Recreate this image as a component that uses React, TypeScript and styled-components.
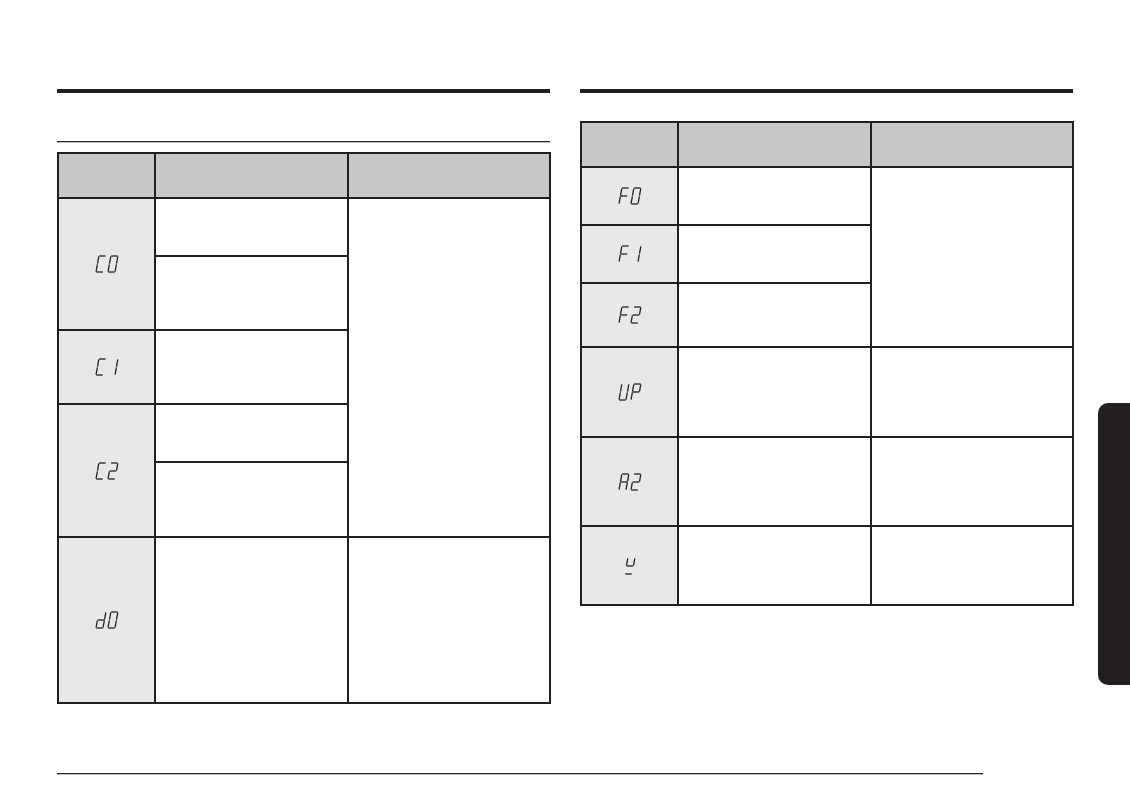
import React from "react";
import styled, { createGlobalStyle } from "styled-components";

const Global = createGlobalStyle`
  html, body { margin: 0; padding: 0; background: #ffffff; }
  body { font-family: "Liberation Sans", Arial, sans-serif; color: #231f20; }
`;

const INK = "#231f20";

const Page = styled.div`
  width: 1130px;
  height: 800px;
  box-sizing: border-box;
  padding: 89px 0 26px 57px;
  display: flex;
  flex-direction: column;
  overflow: hidden;
`;

const Main = styled.div`
  display: flex;
  align-items: flex-start;
`;

const Column = styled.section`
  width: 493px;
  display: flex;
  flex-direction: column;
  & + & {
    margin-left: 30px;
  }
`;

const TopRule = styled.div`
  height: 4px;
  background: ${INK};
`;

const SubRule = styled.div`
  height: 1px;
  margin-top: 48px;
  background: ${INK};
  box-shadow: 0 0.5px 0 rgba(35, 31, 32, 0.5);
`;

const Table = styled.table<{ $top: number }>`
  margin-top: ${(p) => p.$top}px;
  width: 492px;
  border-collapse: collapse;
  table-layout: fixed;
`;

const Row = styled.tr<{ $h: number }>`
  height: ${(p) => p.$h}px;
`;

const HeadCell = styled.th`
  background: #c8c8c8;
  border: 2px solid ${INK};
  padding: 0;
`;

const CodeCell = styled.td`
  background: #e8e8e8;
  border: 2px solid ${INK};
  text-align: center;
  vertical-align: middle;
  padding: 0;
`;

const Cell = styled.td`
  background: #ffffff;
  border: 2px solid ${INK};
  padding: 0;
`;

const Tab = styled.div`
  margin-left: 25px;
  margin-top: 314px;
  width: 32px;
  height: 282px;
  background: ${INK};
  border-radius: 10px 0 0 10px;
  flex-shrink: 0;
`;

const FooterRule = styled.div`
  margin-top: auto;
  width: 926px;
  height: 1px;
  background: ${INK};
  box-shadow: 0 0.5px 0 rgba(35, 31, 32, 0.5);
`;

const SegSvg = styled.svg`
  display: block;
  margin: 0 auto;
  overflow: visible;
`;

type Seg = "a" | "b" | "c" | "d" | "e" | "f" | "g";

const GLYPHS: Record<string, Seg[]> = {
  C: ["a", "d", "e", "f"],
  "0": ["a", "b", "c", "d", "e", "f"],
  "1": ["b", "c"],
  "2": ["a", "b", "g", "e", "d"],
  d: ["b", "c", "d", "e", "g"],
  F: ["a", "f", "e", "g"],
  U: ["b", "c", "d", "e", "f"],
  P: ["a", "b", "f", "g", "e"],
  A: ["a", "b", "c", "e", "f", "g"],
  u: ["f", "b", "g", "d"],
};

const W = 7;
const H = 16;
const K = 0.18;
const PITCH = 12;
const GAP = 0.9;

const SEGS: Record<Seg, [number, number, number, number]> = {
  a: [0, 0, W, 0],
  b: [W, 0, W, H / 2],
  c: [W, H / 2, W, H],
  d: [0, H, W, H],
  e: [0, H / 2, 0, H],
  f: [0, 0, 0, H / 2],
  g: [0, H / 2, W, H / 2],
};

function SegCode({ code, label }: { code: string; label: string }) {
  const chars = code.split("");
  const width = PITCH * (chars.length - 1) + W + H * K + 2;
  const lines: React.ReactNode[] = [];
  chars.forEach((ch, i) => {
    const ox = 1 + i * PITCH;
    (GLYPHS[ch] || []).forEach((s) => {
      let [x1, y1, x2, y2] = SEGS[s];
      const len = Math.hypot(x2 - x1, y2 - y1);
      const ux = (x2 - x1) / len;
      const uy = (y2 - y1) / len;
      x1 += ux * GAP;
      y1 += uy * GAP;
      x2 -= ux * GAP;
      y2 -= uy * GAP;
      const sx = (x: number, y: number) => ox + x + (H - y) * K;
      lines.push(
        <line
          key={`${i}${s}`}
          x1={sx(x1, y1)}
          y1={y1 + 1}
          x2={sx(x2, y2)}
          y2={y2 + 1}
          stroke={INK}
          strokeWidth={1.3}
          strokeLinecap="square"
        />
      );
    });
  });
  return (
    <SegSvg width={width} height={H + 2} viewBox={`0 0 ${width} ${H + 2}`} role="img" aria-label={label}>
      <title>{label}</title>
      {lines}
    </SegSvg>
  );
}

function Cols() {
  return (
    <colgroup>
      <col style={{ width: 97 }} />
      <col style={{ width: 193 }} />
      <col style={{ width: 202 }} />
    </colgroup>
  );
}

function Header() {
  return (
    <thead>
      <Row $h={45}>
        <HeadCell />
        <HeadCell />
        <HeadCell />
      </Row>
    </thead>
  );
}

export default function App() {
  return (
    <>
      <Global />
      <Page>
        <Main>
          <Column>
            <TopRule />
            <SubRule />
            <Table $top={10}>
              <Cols />
              <Header />
              <tbody>
                <Row $h={58}>
                  <CodeCell rowSpan={2}>
                    <SegCode code="C0" label="C0" />
                  </CodeCell>
                  <Cell />
                  <Cell rowSpan={5} />
                </Row>
                <Row $h={74}>
                  <Cell />
                </Row>
                <Row $h={74}>
                  <CodeCell>
                    <SegCode code="C1" label="C1" />
                  </CodeCell>
                  <Cell />
                </Row>
                <Row $h={58}>
                  <CodeCell rowSpan={2}>
                    <SegCode code="C2" label="C2" />
                  </CodeCell>
                  <Cell />
                </Row>
                <Row $h={75}>
                  <Cell />
                </Row>
                <Row $h={166}>
                  <CodeCell>
                    <SegCode code="d0" label="d0" />
                  </CodeCell>
                  <Cell />
                  <Cell />
                </Row>
              </tbody>
            </Table>
          </Column>
          <Column>
            <TopRule />
            <Table $top={28}>
              <Cols />
              <Header />
              <tbody>
                <Row $h={58}>
                  <CodeCell>
                    <SegCode code="F0" label="F0" />
                  </CodeCell>
                  <Cell />
                  <Cell rowSpan={3} />
                </Row>
                <Row $h={58}>
                  <CodeCell>
                    <SegCode code="F1" label="F1" />
                  </CodeCell>
                  <Cell />
                </Row>
                <Row $h={64}>
                  <CodeCell>
                    <SegCode code="F2" label="F2" />
                  </CodeCell>
                  <Cell />
                </Row>
                <Row $h={90}>
                  <CodeCell>
                    <SegCode code="UP" label="UP" />
                  </CodeCell>
                  <Cell />
                  <Cell />
                </Row>
                <Row $h={89}>
                  <CodeCell>
                    <SegCode code="A2" label="A2" />
                  </CodeCell>
                  <Cell />
                  <Cell />
                </Row>
                <Row $h={79}>
                  <CodeCell>
                    <SegCode code="u" label="u" />
                  </CodeCell>
                  <Cell />
                  <Cell />
                </Row>
              </tbody>
            </Table>
          </Column>
          <Tab />
        </Main>
        <FooterRule />
      </Page>
    </>
  );
}
